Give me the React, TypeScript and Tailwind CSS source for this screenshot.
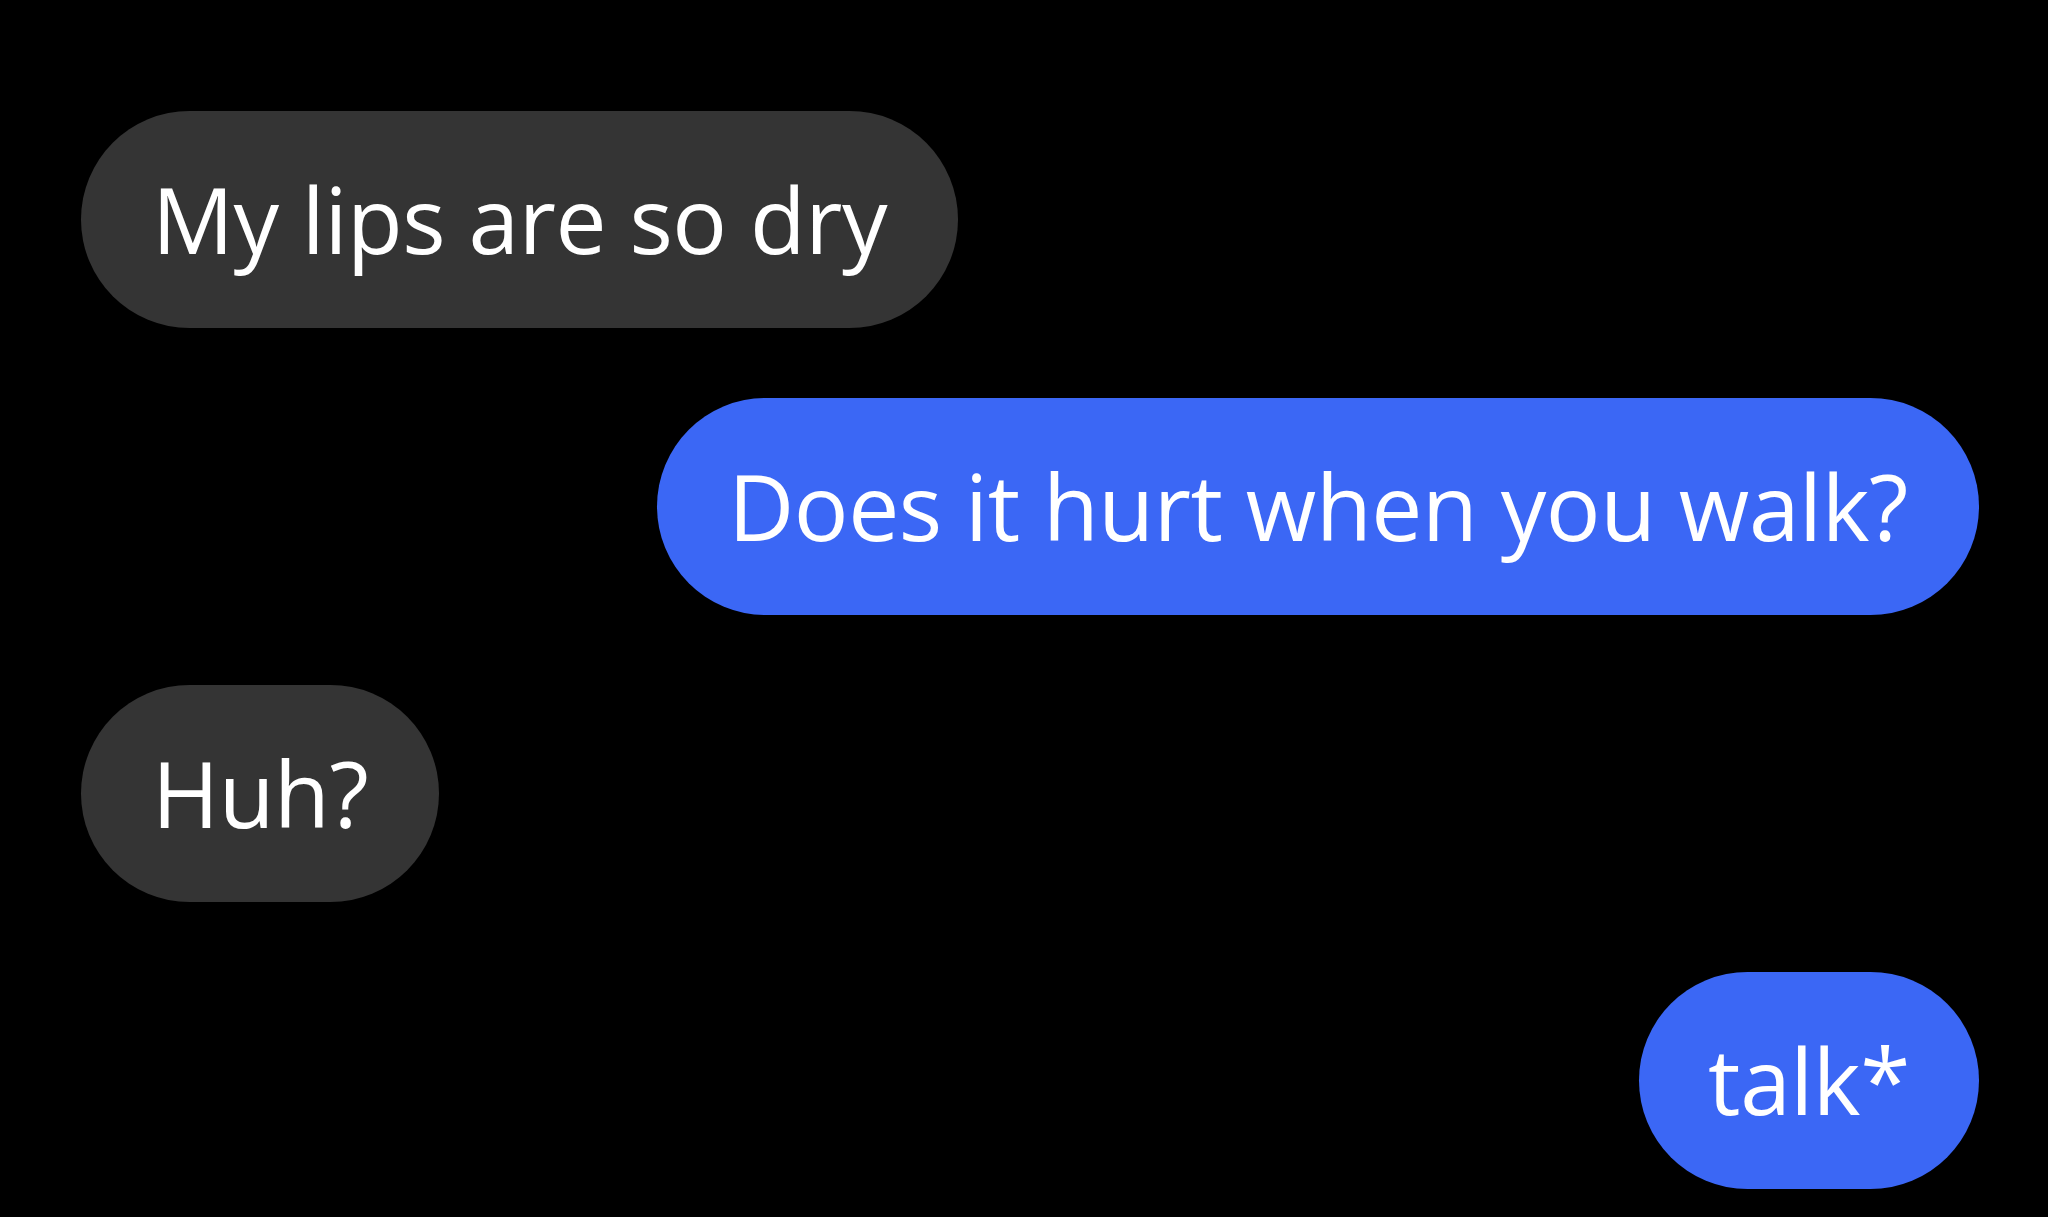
export default function App() {
  const font = { fontFamily: '"Open Sans", "Noto Sans", sans-serif' };
  return (
    <div className="w-full min-h-[1217px] bg-black pt-[111px] pl-[81px] pr-[69px] flex flex-col gap-[70px]" style={font}>
      <div className="flex justify-start">
        <div className="h-[217px] rounded-full bg-[#343434] px-[71px] flex items-center text-white text-[91px] tracking-[-0.4px] leading-none">My lips are so dry</div>
      </div>
      <div className="flex justify-end">
        <div className="h-[217px] rounded-full bg-[#3b67f5] px-[71px] flex items-center text-white text-[91px] tracking-[-0.4px] leading-none">Does it hurt when you walk?</div>
      </div>
      <div className="flex justify-start">
        <div className="h-[217px] rounded-full bg-[#343434] px-[71px] flex items-center text-white text-[91px] tracking-[-0.4px] leading-none">Huh?</div>
      </div>
      <div className="flex justify-end">
        <div className="h-[217px] rounded-full bg-[#3b67f5] px-[69px] flex items-center text-white text-[91px] tracking-[-0.4px] leading-none">talk*</div>
      </div>
    </div>
  );
}
